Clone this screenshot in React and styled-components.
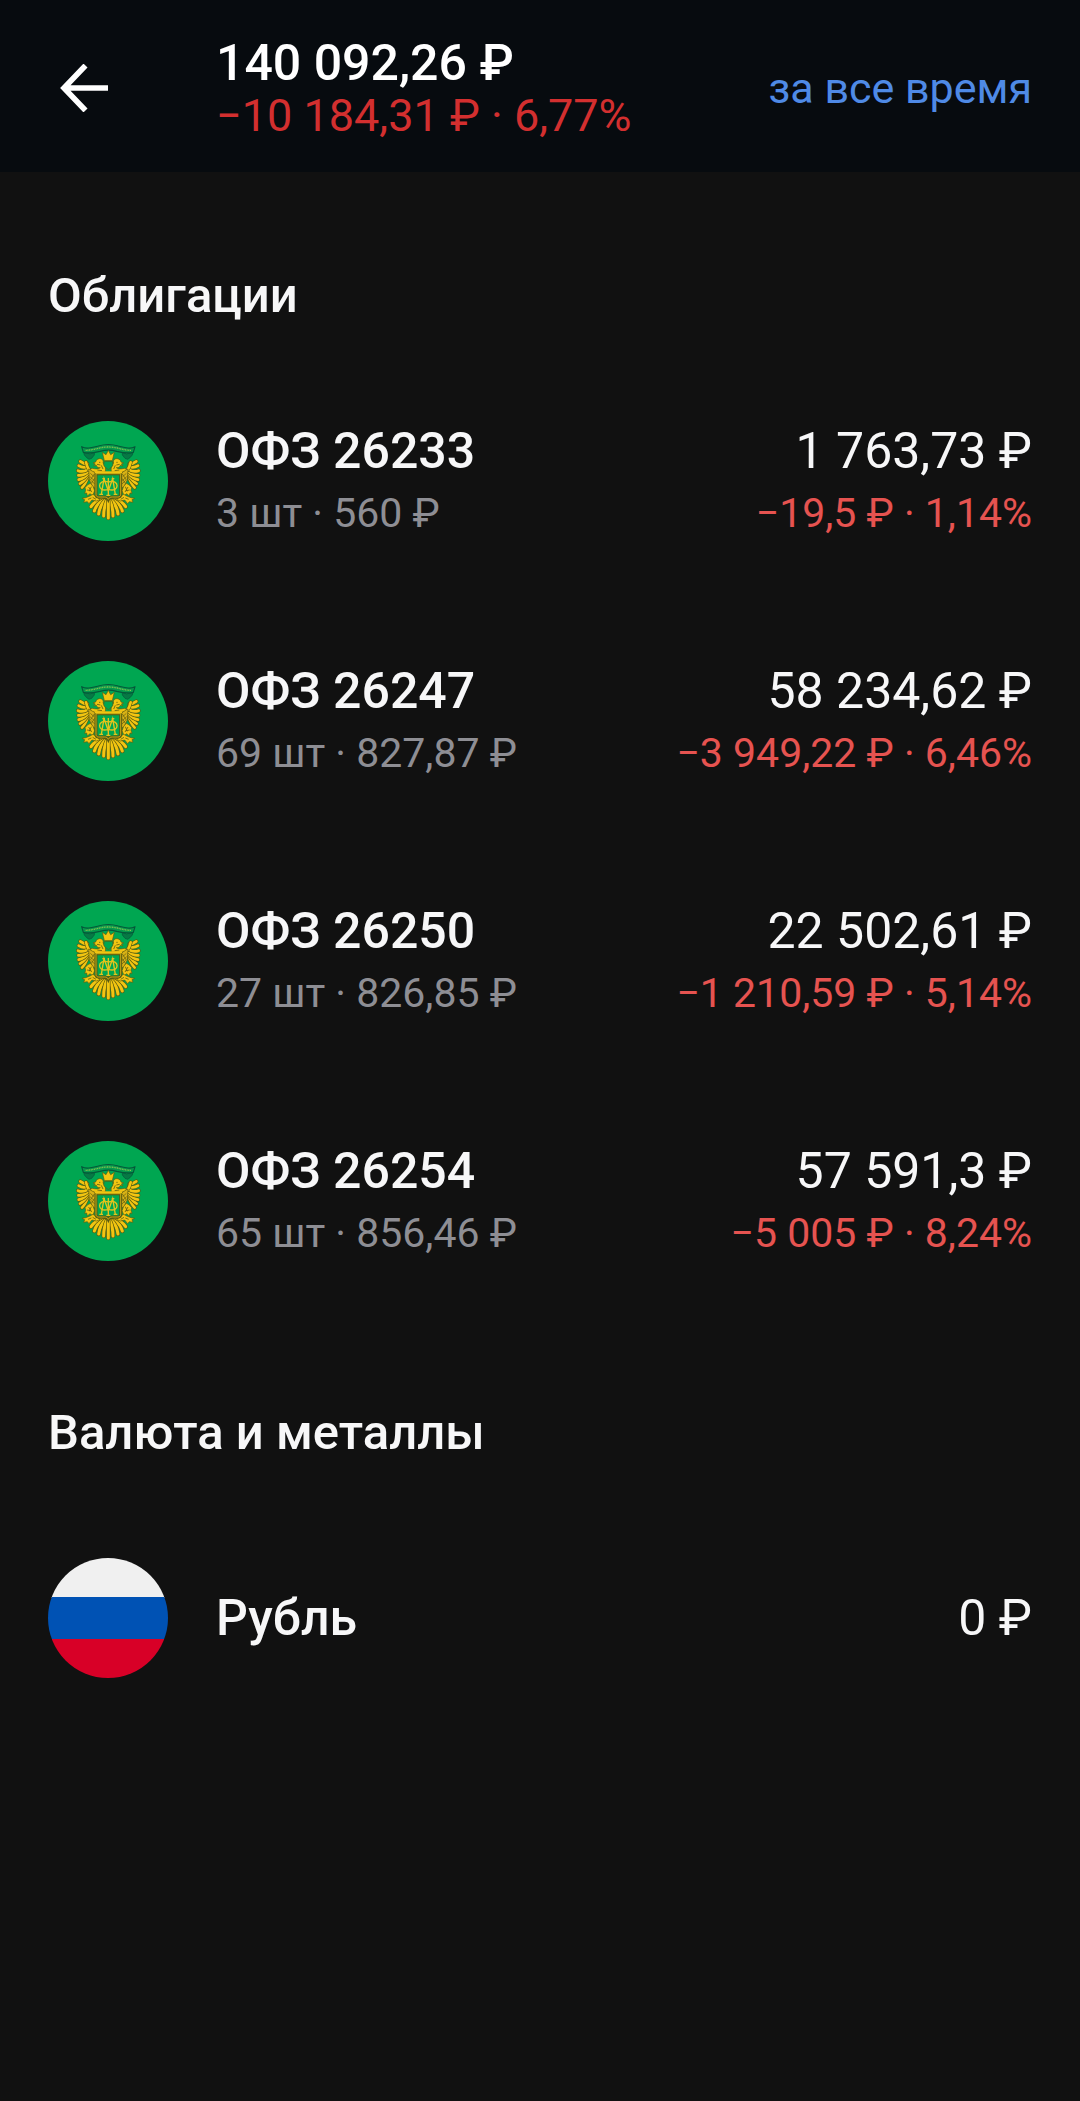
import React from "react";
import styled, { createGlobalStyle } from "styled-components";

const GlobalStyle = createGlobalStyle`
  *, *::before, *::after {
    box-sizing: border-box;
  }
  html {
    background: #111111;
  }
  body {
    margin: 0;
    background: #111111;
    color: #f7f7f8;
    font-family: Roboto, "Noto Sans", sans-serif;
  }
`;

const Page = styled.div`
  min-height: 100vh;
`;

const Header = styled.header`
  display: flex;
  align-items: center;
  min-height: 172px;
  padding: 4px 48px 0;
  background: #070b0f;
`;

const BackButton = styled.button`
  display: flex;
  flex: none;
  align-items: center;
  width: 168px;
  height: 96px;
  padding: 0 12px;
  border: 0;
  background: none;
  color: #ffffff;
  cursor: pointer;
`;

const Totals = styled.div`
  flex: 1;
  min-width: 0;
  white-space: nowrap;
`;

const Total = styled.h1`
  margin: 0;
  color: #ffffff;
  font-size: 50px;
  font-weight: 500;
  line-height: 56px;
`;

const TotalChange = styled.p`
  margin: 0;
  color: #d32f2f;
  font-size: 45px;
  line-height: 50px;
`;

const PeriodButton = styled.button`
  flex: none;
  padding: 0;
  border: 0;
  background: none;
  color: #4f8ae6;
  font-family: inherit;
  font-size: 43px;
  line-height: 60px;
  white-space: nowrap;
  cursor: pointer;
`;

const Content = styled.main`
  padding: 12px 48px 0;
`;

const SectionTitle = styled.h2`
  margin: 0;
  padding: 82px 0 35px;
  font-size: 49px;
  font-weight: 500;
  line-height: 60px;
`;

const List = styled.ul`
  margin: 0;
  padding: 0;
  list-style: none;
`;

const Row = styled.li`
  display: flex;
  align-items: center;
  gap: 48px;
  height: 240px;
  white-space: nowrap;
`;

const Details = styled.div`
  display: flex;
  flex: 1;
  flex-direction: column;
  gap: 4px;
  min-width: 0;
`;

const Values = styled(Details)`
  flex: none;
  align-items: flex-end;
`;

const Primary = styled.span`
  font-size: 50px;
  font-weight: ${(p) => (p.$strong ? 500 : 400)};
  line-height: 60px;
`;

const Secondary = styled.span`
  color: ${(p) => (p.$loss ? "#e65350" : "#8e8e94")};
  font-size: 41px;
  line-height: 56px;
`;

const Icon = styled.svg`
  display: block;
  flex: none;
  width: ${(p) => p.$size}px;
  height: ${(p) => p.$size}px;
`;

const BackArrow = () => (
  <Icon $size={48} viewBox="0 0 48 48" fill="none" stroke="currentColor" strokeWidth="5.6" aria-hidden="true">
    <path d="M48 24H5M25.500 1.500 4 24l21.500 22.500" />
  </Icon>
);

const wingFeathers = [
  "M84 140C80 152 75 164 66 173",
  "M84 136C76 148 70 156 60 161",
  "M84 131C76 141 66 147 56 149",
  "M84 125C74 134 64 137 55 136",
  "M84 118C73 126 64 126 54 122",
  "M82 110C72 114 64 112 56 107",
  "M82 102C75 103 68 99 61 94",
  "M97 128C88 124 82 113 78 97",
];

const tailFeathers = [
  "M128 209C114 210 102 216 93 230",
  "M131 211C117 217 107 228 103 243",
  "M135 212C124 222 118 236 116 252",
  "M140 213C134 226 131 240 131 258",
];

const Feather = ({ d, width = 8 }) => (
  <g fill="none" strokeLinecap="round">
    <path d={d} stroke="#5a5a10" strokeWidth={width + 4} />
    <path d={d} stroke="#f2c511" strokeWidth={width} />
  </g>
);

const EagleHalf = () => (
  <g stroke="#5a5a10" strokeWidth="2" strokeLinejoin="round">
    {wingFeathers.map((d) => (
      <Feather key={d} d={d} />
    ))}
    {tailFeathers.map((d) => (
      <Feather key={d} d={d} width={9} />
    ))}
    <path fill="#d9b216" d="M86 117l12 5 8 8v45l-8-5-10-20z" />
    <path fill="none" d="M91 130l11 10M90 140l13 12M93 151l11 11M103 132l-12 18M104 145l-10 15" />
    <path
      fill="#f2c511"
      d="M136 126c2-13-1-21-7-27 3-8-3-14-11-13-7 1-10 5-11 10l-8 3 7 3-5 6 8-2c1 5 6 8 12 7-7 5-15 4-24 2l-7 3c5 5 10 8 17 9z"
    />
    <path fill="none" strokeWidth="2.400" d="M117 97h4M111 103l10 2M124 106l5 11M112 120l14 2" />
    <path fill="#f2c511" d="M82 165l9-5 8 9 5 13-6 15-8-6-8 7-2-9-6 1 3-9-2-8z" />
    <path fill="none" strokeWidth="2.400" d="M86 171l9 15M81 180l11 2M94 170l-6 14" />
    <path fill="#f2c511" d="M90 198l9-5 11 7 10 9-11 4-13-3-9 11-5-6-11 2 3-8-8-4 11-2z" />
    <path fill="none" strokeWidth="2.400" d="M84 208l10-4M98 202l10 6" />
  </g>
);

const TreasuryEmblem = () => (
  <Icon $size={120} viewBox="-36 -27 360 360" aria-hidden="true">
    <circle cx="144" cy="153" r="180" fill="#00a651" />
    <EagleHalf />
    <g transform="translate(290 0) scale(-1 1)">
      <EagleHalf />
    </g>
    <Feather d="M145 212V264" width={9} />
    <path
      fill="#067a44"
      stroke="#05583a"
      strokeWidth="2"
      strokeLinejoin="round"
      d="M71 66l19 6 13-5v8l-8 10-8 3-7-5-7-8zM219 66l-19 6-13-5v8l8 10 8 3 7-5 7-8z"
    />
    <path
      fill="#07984c"
      stroke="#05583a"
      strokeWidth="3.500"
      strokeLinejoin="round"
      d="M65 50c15 8 30 3 50-2 20-6 40-6 60 0 20 5 35 10 50 2l-5 17c-17 4-33 1-50-3-17-5-33-5-50 0-17 4-33 7-50 3z"
    />
    <path fill="none" stroke="#8dc34d" strokeWidth="4" strokeDasharray="3 2" d="M77 61c16 0 28-4 42-7 18-4 34-4 52 0 14 3 26 7 42 7" />
    <path fill="#f2c511" stroke="#5a5a10" strokeWidth="2" strokeLinejoin="round" d="M133 92l-6-25 11 7 7-13 7 13 11-7-6 25z" />
    <path fill="#00a651" stroke="#5a5a10" strokeWidth="2" d="M133 94h24l2 11c-3 6-8 10-14 14-6-4-11-8-14-14z" />
    <path fill="#00a651" stroke="#5a5a10" strokeWidth="9" d="M108 131h74v62c0 5-3 8-8 8h-17c-6 0-10 2-12 7-2-5-6-7-12-7h-17c-5 0-8-3-8-8z" />
    <path fill="none" stroke="#d8b91a" strokeWidth="2.500" d="M108 131h74v62c0 5-3 8-8 8h-17c-6 0-10 2-12 7-2-5-6-7-12-7h-17c-5 0-8-3-8-8z" />
    <path stroke="#f2c511" strokeWidth="6" d="M104 127h82" />
    <g fill="none" stroke="#e5c41c" strokeWidth="4">
      <path d="M124 193l8-47 13 36 13-36 8 47M118 193h11M161 193h11M127 146h8M155 146h8" />
      <path d="M145 144v52M139 196h12M145 156c-35-11-35 34 0 22 35 12 35-33 0-22z" />
    </g>
  </Icon>
);

const RussianFlag = () => (
  <Icon $size={120} viewBox="0 0 120 120" aria-hidden="true">
    <defs>
      <clipPath id="flag-circle">
        <circle cx="60" cy="60" r="60" />
      </clipPath>
    </defs>
    <g clipPath="url(#flag-circle)">
      <path fill="#f0f0f0" d="M0 0h120v40H0z" />
      <path fill="#0052b4" d="M0 39h120v43H0z" />
      <path fill="#d80027" d="M0 81h120v39H0z" />
    </g>
  </Icon>
);

const bonds = [
  { name: "ОФЗ 26233", holding: "3 шт · 560 ₽", value: "1 763,73 ₽", change: "−19,5 ₽ · 1,14%" },
  { name: "ОФЗ 26247", holding: "69 шт · 827,87 ₽", value: "58 234,62 ₽", change: "−3 949,22 ₽ · 6,46%" },
  { name: "ОФЗ 26250", holding: "27 шт · 826,85 ₽", value: "22 502,61 ₽", change: "−1 210,59 ₽ · 5,14%" },
  { name: "ОФЗ 26254", holding: "65 шт · 856,46 ₽", value: "57 591,3 ₽", change: "−5 005 ₽ · 8,24%" },
];

const currencies = [{ name: "Рубль", value: "0 ₽" }];

const Asset = ({ icon, name, holding, value, change }) => (
  <Row>
    {icon}
    <Details>
      <Primary $strong>{name}</Primary>
      {holding && <Secondary>{holding}</Secondary>}
    </Details>
    <Values>
      <Primary>{value}</Primary>
      {change && <Secondary $loss>{change}</Secondary>}
    </Values>
  </Row>
);

export default function App() {
  return (
    <Page>
      <GlobalStyle />
      <Header>
        <BackButton type="button" aria-label="Назад">
          <BackArrow />
        </BackButton>
        <Totals>
          <Total>140 092,26 ₽</Total>
          <TotalChange>−10 184,31 ₽ · 6,77%</TotalChange>
        </Totals>
        <PeriodButton type="button">за все время</PeriodButton>
      </Header>
      <Content>
        <section>
          <SectionTitle>Облигации</SectionTitle>
          <List>
            {bonds.map((bond) => (
              <Asset key={bond.name} icon={<TreasuryEmblem />} {...bond} />
            ))}
          </List>
        </section>
        <section>
          <SectionTitle>Валюта и металлы</SectionTitle>
          <List>
            {currencies.map((currency) => (
              <Asset key={currency.name} icon={<RussianFlag />} {...currency} />
            ))}
          </List>
        </section>
      </Content>
    </Page>
  );
}
